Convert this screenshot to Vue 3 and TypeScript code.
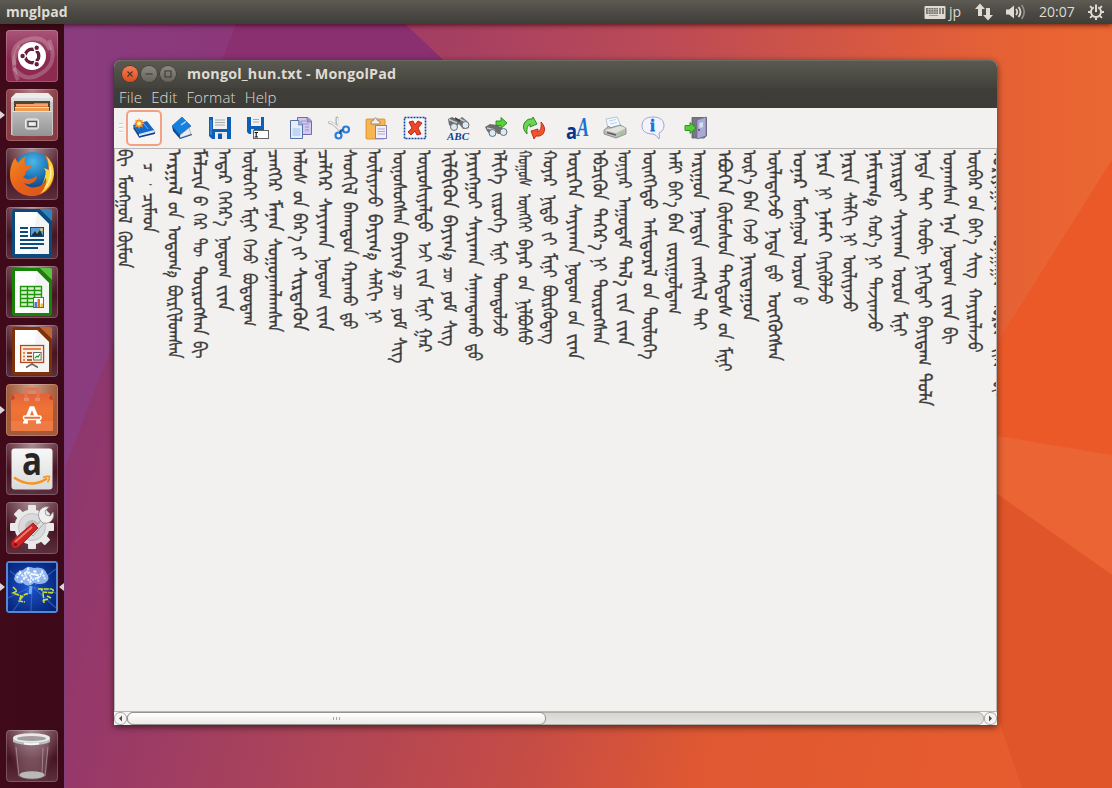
<script setup lang="ts">
import { nextTick, onMounted, ref } from 'vue'

// A word of the vertical text: its letters, where it begins and where it ends, in thirds of a pixel.
type Word = [string, number, number]

const lines: Word[][] = [
  [['ᠪᠢ', 12, 65], ['ᠮᠣᠩᠭᠣᠯ', 90, 235], ['ᠬᠦᠮᠦᠨ', 258, 370]],
  [['ᠴ', 53, 80], ['᠂', 112, 122], ['ᠴᠢᠮᠡᠳ', 145, 265]],
  [['ᠠᠷᠭᠠᠯ', 12, 150], ['\u202fᠤᠨ', 172, 220], ['ᠤᠲᠤᠭ᠎ᠠ', 243, 398], ['ᠪᠦᠷᠭᠢᠯᠤᠭᠰᠠᠨ', 420, 640]],
  [['ᠮᠠᠯᠴᠢᠨ', 12, 137], ['\u202fᠤ', 155, 185], ['ᠭᠡᠷ', 205, 255], ['ᠲᠦ', 278, 335], ['ᠲᠥᠷᠦᠭᠰᠡᠨ', 362, 570], ['ᠪᠢ', 588, 640]],
  [['ᠠᠲᠠᠷ', 12, 117], ['ᠬᠡᠭᠡᠷ᠎ᠡ', 138, 245], ['ᠨᠤᠲᠤᠭ', 273, 398], ['\u202fᠢᠶᠠᠨ', 420, 500]],
  [['ᠥᠯᠦᠭᠡᠢ', 12, 165], ['ᠮᠢᠨᠢ', 187, 262], ['ᠭᠡᠵᠦ', 283, 358], ['ᠪᠣᠳᠣᠳᠠᠭ', 385, 545]],
  [['ᠴᠡᠩᠬᠡᠷ', 12, 140], ['ᠮᠠᠨᠠᠨ', 165, 260], ['ᠰᠤᠭᠤᠨᠠᠭᠯᠠᠭᠰᠠᠨ', 280, 562]],
  [['ᠠᠯᠤᠰ', 12, 118], ['\u202fᠤᠨ', 140, 187], ['ᠪᠠᠷ᠎ᠠ', 203, 290], ['\u202fᠶᠢ', 305, 345], ['ᠰᠢᠷᠲᠡᠬᠦᠨ', 365, 558]],
  [['ᠴᠡᠯᠭᠡᠷ', 12, 137], ['ᠰᠠᠶᠢᠬᠠᠨ', 158, 308], ['ᠨᠤᠲᠤᠭ', 335, 460], ['\u202fᠢᠶᠠᠨ', 482, 558]],
  [['ᠰᠡᠳᠬᠢᠯ', 12, 148], ['ᠪᠠᠬᠠᠳᠤᠨ', 170, 327], ['ᠬᠠᠷᠠᠬᠤ', 347, 482], ['\u202fᠳᠤ', 507, 555]],
  [['ᠦᠯᠢᠶᠡᠵᠦ', 12, 185], ['ᠪᠠᠶᠢᠭ᠎ᠠ', 207, 348], ['ᠰᠠᠯᠬᠢ', 370, 470], ['ᠨᠢ', 495, 535]],
  [['ᠦᠨᠦᠰᠦᠭᠰᠡᠨ', 15, 242], ['ᠪᠠᠶᠢᠭ᠎ᠠ', 260, 400], ['ᠴᠦ', 418, 465], ['ᠶᠤᠮ', 490, 555], ['ᠰᠢᠭ', 577, 657]],
  [['ᠦᠷᠦᠰᠢᠶᠡᠯᠲᠦ', 15, 262], ['ᠡᠵᠢ', 290, 350], ['\u202fᠶᠢᠨ', 370, 432], ['ᠮᠢᠨᠢ', 455, 527], ['ᠭᠠᠷ', 550, 623]],
  [['ᠢᠯᠪᠢᠬᠦᠨ', 15, 188], ['ᠪᠠᠶᠢᠭ᠎ᠠ', 210, 348], ['ᠴᠦ', 367, 413], ['ᠶᠤᠮ', 438, 502], ['ᠰᠢᠭ', 525, 605]],
  [['ᠨᠠᠷᠢᠩᠭᠤᠢ', 15, 193], ['ᠰᠠᠶᠢᠬᠠᠨ', 213, 362], ['ᠰᠠᠨᠠᠭᠳᠠᠬᠤ', 385, 578], ['\u202fᠳᠤ', 600, 650]],
  [['ᠡᠯᠢᠭᠡ', 15, 118], ['ᠵᠢᠷᠦᠬᠡ', 140, 263], ['ᠮᠢᠨᠢ', 287, 358], ['ᠳᠣᠭᠳᠣᠯᠵᠤ', 383, 573]],
  [['ᠬᠤᠭᠤᠰ', 15, 125], ['ᠦᠩᠭᠡᠢ', 147, 262], ['ᠪᠠᠶᠠᠷ', 283, 372], ['\u202fᠤᠨ', 395, 440], ['ᠨᠢᠯᠪᠤᠰᠤ', 463, 603]],
  [['ᠬᠣᠶᠠᠷ', 15, 125], ['ᠨᠢᠳᠦ', 150, 240], ['\u202fᠶᠢ', 262, 300], ['ᠮᠢᠨᠢ', 323, 397], ['ᠪᠦᠷᠬᠦᠳᠡᠭ', 420, 598]],
  [['ᠥᠷᠭᠡᠨ', 15, 158], ['ᠰᠠᠶᠢᠬᠠᠨ', 178, 327], ['ᠨᠤᠲᠤᠭ', 350, 475], ['\u202fᠤᠨ', 500, 545], ['\u202fᠢᠶᠠᠨ', 565, 643]],
  [['ᠡᠪᠴᠢᠭᠦᠨ', 15, 165], ['ᠲᠡᠭᠡᠷ᠎ᠡ', 188, 315], ['ᠨᠢ', 335, 377], ['ᠲᠥᠷᠦᠭᠰᠡᠨ', 402, 600]],
  [['ᠤᠨᠢᠶᠠᠷ', 15, 130], ['ᠠᠭᠤᠳᠠᠮ', 155, 308], ['ᠲᠠᠯ᠎ᠠ', 332, 423], ['\u202fᠶᠢᠨ', 443, 508], ['\u202fᠢᠶᠠᠨ', 525, 605]],
  [['ᠦᠩᠭᠡᠲᠦ', 15, 193], ['ᠠᠮᠢᠳᠤᠷᠠᠯ', 218, 393], ['\u202fᠤᠨ', 415, 463], ['ᠲᠥᠯᠦᠭᠡ', 485, 642]],
  [['ᠠᠮᠢ', 15, 87], ['ᠪᠡᠶ᠎ᠡ', 107, 187], ['ᠪᠡᠨ', 205, 268], ['ᠵᠣᠷᠢᠭᠤᠯᠳᠠᠭ', 290, 507]],
  [['ᠠᠷᠢᠭᠤᠨ', 15, 163], ['ᠨᠠᠨᠳᠢᠨ', 190, 310], ['ᠵᠠᠩᠰᠢᠯ', 333, 465], ['ᠲᠠᠢ', 490, 557]],
  [['ᠡᠪᠦᠭᠡᠨ', 15, 150], ['ᠬᠦᠮᠦᠰᠦᠨ', 170, 335], ['ᠲᠡᠭᠲᠦᠰ', 357, 517], ['\u202fᠤᠨ', 537, 585], ['ᠮᠢᠨᠢ', 607, 680]],
  [['ᠦᠷ᠎ᠡ', 15, 118], ['ᠪᠡᠨ', 138, 202], ['ᠭᠡᠵᠦ', 222, 300], ['ᠨᠠᠢᠳᠠᠭᠤᠨ', 325, 532]],
  [['ᠦᠯᠡᠳᠡᠭᠵᠦ', 15, 223], ['ᠨᠠᠳᠠ', 250, 342], ['\u202fᠳᠤ', 363, 413], ['ᠦᠭᠭᠦᠭᠰᠡᠨ', 440, 648]],
  [['ᠤᠨᠠᠷ', 15, 133], ['ᠮᠣᠩᠭᠣᠯ', 155, 300], ['ᠣᠷᠣᠨ', 325, 437], ['\u202fᠤ', 460, 480]],
  [['ᠨᠠᠷᠠ', 15, 100], ['ᠨᠢ', 125, 163], ['ᠨᠠᠮᠠᠢ', 190, 293], ['ᠭᠡᠶᠢᠭᠦᠯᠵᠦ', 317, 478]],
  [['ᠨᠠᠷᠢᠨ', 15, 118], ['ᠰᠠᠯᠬᠢ', 140, 242], ['ᠨᠢ', 265, 305], ['ᠦᠯᠢᠶᠡᠵᠦ', 330, 500]],
  [['ᠨᠠᠮᠢᠷᠠᠭ᠎ᠠ', 15, 185], ['ᠬᠤᠷ᠎ᠠ', 210, 307], ['ᠨᠢ', 330, 372], ['ᠳᠠᠵᠢᠭᠵᠤ', 395, 560]],
  [['ᠨᠠᠶᠢᠷᠲᠠᠢ', 15, 170], ['ᠰᠠᠶᠢᠬᠠᠨ', 192, 343], ['ᠣᠷᠣᠨ', 365, 478], ['ᠮᠢᠨᠢ', 500, 573]],
  [['ᠨᠠᠳᠠ', 15, 107], ['ᠲᠠᠢ', 127, 198], ['ᠬᠤᠪᠢ', 220, 330], ['ᠨᠢᠭᠡᠲᠡᠢ', 355, 490], ['ᠪᠠᠶᠢᠳᠠᠭ', 512, 662], ['ᠲᠤᠯᠠ', 683, 782]],
  [['ᠤᠨᠠᠭᠰᠠᠨ', 15, 182], ['ᠡᠨᠡ', 207, 272], ['ᠨᠤᠲᠤᠭ', 297, 423], ['\u202fᠢᠶᠠᠨ', 445, 525], ['ᠪᠢ', 545, 597]],
  [['ᠥᠪᠡᠷ', 15, 135], ['\u202fᠤᠨ', 155, 200], ['ᠪᠡᠶ᠎ᠡ', 220, 300], ['ᠰᠢᠭ', 322, 403], ['ᠬᠠᠶᠢᠷᠠᠯᠠᠵᠤ', 430, 623]],
  [['ᠤᠷᠢᠶᠠᠭᠠᠨ', 15, 205], ['ᠤᠨᠠᠭᠠᠭᠠᠨ', 265, 430], ['ᠣᠷᠣᠨ', 475, 575], ['\u202fᠢᠶᠠᠨ', 610, 670], ['ᠪᠢ', 708, 755]],
]

// The narrow space that a suffix begins with belongs to the gap before it.
const lead = (w: Word) => (w[0].startsWith('\u202f') ? 4.5 : 0)
const gapBefore = (line: Word[], i: number) => (line[i][1] - (i ? line[i - 1][2] : 12)) / 3 - lead(line[i])
const sizeOf = (w: Word) => (w[2] - w[1]) / 3 + lead(w)

const page = ref<HTMLElement | null>(null)
const fit = ref<Record<string, number>>({})

// Stretches each word to the length it is set in.
function measure() {
  const next: Record<string, number> = {}
  page.value?.querySelectorAll<HTMLElement>('.glyphs').forEach((el) => {
    const [l, w] = el.dataset.key!.split('-').map(Number)
    if (el.offsetHeight) next[el.dataset.key!] = sizeOf(lines[l][w]) / el.offsetHeight
  })
  fit.value = next
}

onMounted(async () => {
  await nextTick()
  measure()
  document.fonts?.ready.then(measure)
})

const menus = ['File', 'Edit', 'Format', 'Help']
</script>

<template>
  <div class="desktop">
    <svg class="wallpaper" viewBox="0 0 1112 788" preserveAspectRatio="none" aria-hidden="true">
      <defs>
        <linearGradient id="wall" gradientUnits="userSpaceOnUse" x1="60" y1="300" x2="1010" y2="540">
          <stop offset="0" stop-color="#883772" />
          <stop offset=".12" stop-color="#95386a" />
          <stop offset=".36" stop-color="#ad4458" />
          <stop offset=".58" stop-color="#c64c45" />
          <stop offset=".75" stop-color="#df5832" />
          <stop offset="1" stop-color="#e65c2f" />
        </linearGradient>
        <linearGradient id="wallTop" x1="0" x2="1">
          <stop offset="0" stop-color="#a03d64" />
          <stop offset=".36" stop-color="#bb4a57" />
          <stop offset=".72" stop-color="#dc5b3d" />
          <stop offset=".9" stop-color="#e96432" />
          <stop offset="1" stop-color="#ea6632" />
        </linearGradient>
        <linearGradient id="facet" x1="0" y1="0" x2="1" y2="0">
          <stop offset="0" stop-color="#8a3d80" />
          <stop offset="1" stop-color="#8b3779" />
        </linearGradient>
      </defs>
      <rect width="1112" height="788" fill="url(#wall)" />
      <path d="M400 24H1112V160L980 370V120L448 60Z" fill="url(#wallTop)" />
      <path d="M64 24H236L220 66L64 470Z" fill="url(#facet)" />
      <path d="M236 24H405L450 66H220Z" fill="#8a2f70" />
      <path d="M1112 160V460L980 433V370Z" fill="#eb5928" />
      <path d="M980 433L1112 455V575L980 482Z" fill="#ea6434" />
      <path d="M980 482L1112 575V788H1022L1000 724Z" fill="#e05529" />
    </svg>

    <header class="panel">
      <span class="app-name">mnglpad</span>
      <div class="indicators">
        <svg class="i-key" width="22" height="15" viewBox="0 0 22 15">
          <rect x=".5" y="1" width="21" height="13" rx="1" fill="#dfdbd2" />
          <rect x="2" y="3" width="12" height="6" fill="#77756f" />
          <rect x="15" y="3" width="2" height="6" fill="#8d8a83" />
          <rect x="18" y="3" width="2" height="6" fill="#77756f" />
          <path d="M3 4.500H14M2.500 7H14M4.500 3V9M7 3V9M9.500 3V9M12 3V9" stroke="#c8c5bd" stroke-width=".6" />
          <path d="M5 10.500H14" stroke="#9c9991" />
        </svg>
        <span class="jp">jp</span>
        <svg class="i-net" width="18" height="18" viewBox="0 0 18 18" fill="#dfdbd2">
          <path d="M0 6L5 .5L10 6H7V13H3V6Z" />
          <path d="M8 12H11V5H15V12H18L13 17.500Z" />
        </svg>
        <svg class="i-vol" width="20" height="16" viewBox="0 0 20 16">
          <path d="M0 5.500H3L8 1.500V14.500L3 10.500H0Z" fill="#dfdbd2" />
          <path d="M10 5Q12.500 8 10 11" stroke="#dfdbd2" stroke-width="1.800" fill="none" />
          <path d="M12.500 3Q16.500 8 12.500 13" stroke="#dfdbd2" stroke-width="1.800" fill="none" />
          <path d="M15.500 1Q21 8 15.500 15" stroke="#918f88" stroke-width="1.600" fill="none" />
        </svg>
        <span class="clock">20:07</span>
        <svg class="i-gear" width="18" height="18" viewBox="-9 -9 18 18" fill="none" stroke="#dfdbd2" stroke-width="2">
          <path d="M-2.200 -4.600A5.100 5.100 0 1 0 2.200 -4.600" />
          <path d="M0 -7.500V0" />
          <path d="M5.500 0H8M-5.500 0H-8M0 5.500V8M3.900 3.900L5.900 5.900M-3.900 3.900L-5.900 5.900M3.900 -3.900L5.900 -5.900M-3.900 -3.900L-5.900 -5.900" />
        </svg>
      </div>
    </header>

    <nav class="launcher">
      <div class="tile dash">
        <svg viewBox="0 0 52 52">
          <g fill="none" stroke="#fff" stroke-opacity=".22" stroke-width="4">
            <path d="M9 35Q2 16 20 10T44 20" /><path d="M43 10Q53 32 36 43T8 38" /><path d="M12 50Q3 32 14 16" />
          </g>
          <circle cx="26" cy="26" r="14" fill="#fff" />
          <circle cx="26" cy="26" r="6.800" fill="none" stroke="#671f3d" stroke-width="3.400" />
          <path d="M26 26H36.500M26 26L20.700 16.900M26 26L20.700 35.100" stroke="#fff" stroke-width="1.500" transform="rotate(180 26 26)" />
          <circle cx="26" cy="26" r="5" fill="#fff" />
          <g fill="#671f3d" stroke="#fff" stroke-width="1.200"><circle cx="16.600" cy="26" r="2.800" /><circle cx="30.700" cy="17.700" r="2.800" /><circle cx="30.700" cy="34.300" r="2.800" /></g>
        </svg>
      </div>
      <div class="tile files running">
        <svg viewBox="0 0 52 52">
          <defs><linearGradient id="cab" x1="0" y1="0" x2="0" y2="1"><stop offset="0" stop-color="#bdbdbd" /><stop offset="1" stop-color="#949494" /></linearGradient></defs>
          <path d="M10 4H42L47 9V46H5V9Z" fill="#c9c9c9" />
          <path d="M10 4H42L47 9H5Z" fill="#ededed" />
          <path d="M5 9H47V13H5Z" fill="#dcdcdc" />
          <path d="M8 12H44V24H8Z" fill="#56432f" />
          <path d="M10 15H27L29 14H42V24H10Z" fill="#e8793a" />
          <path d="M10 16H42" stroke="#f7d6a2" />
          <path d="M9 18H43V24H9Z" fill="#f09a50" /><path d="M9 18.500H43" stroke="#fbdcae" />
          <path d="M6.500 22H46V47H6.500Z" fill="url(#cab)" />
          <path d="M6.500 22.500H46" stroke="#e4e4e4" />
          <rect x="19.500" y="30" width="13" height="10" rx="2" fill="#c9c9c9" stroke="#f0f0f0" />
          <rect x="22" y="32.500" width="8.500" height="5" fill="#eee" stroke="#555" stroke-width="1.300" />
        </svg>
      </div>
      <div class="tile plain">
        <svg viewBox="0 0 52 52">
          <defs>
            <radialGradient id="globe" cx=".5" cy=".25" r=".75"><stop offset="0" stop-color="#4bb9e8" /><stop offset=".55" stop-color="#1a70b4" /><stop offset="1" stop-color="#10366e" /></radialGradient>
            <linearGradient id="fox" x1="0" y1="0" x2="1" y2="1"><stop offset="0" stop-color="#f38b1e" /><stop offset=".5" stop-color="#e6601c" /><stop offset="1" stop-color="#d9521a" /></linearGradient>
          </defs>
          <circle cx="27" cy="24" r="20" fill="url(#globe)" />
          <path d="M39 7Q48 14 48 26C48 38 39 48 26 48C13 48 4 39 4 27C4 20 6 14 9 10L12 15Q16 10 20 8Q17 13 20 17L25 18Q25 21 20 23Q20 27 17 29Q24 34 30 28Q32 30 29 33Q24 38 18 35Q24 42 34 38Q44 32 42 17Q41 12 39 7Z" fill="url(#fox)" />
          <path d="M40 8Q48 14 48 26Q46 40 34 46Q42 37 40 30L36 37Q42 24 38 20L43 22Q43 13 40 8Z" fill="#fbd33a" />
          <path d="M44 18Q47 30 39 40" stroke="#fff3a8" stroke-width="1.500" fill="none" />
        </svg>
      </div>
      <div class="tile plain">
        <svg viewBox="0 0 52 52">
          <path d="M9 2H34L46 14V47Q46 50 43 50H9Q6 50 6 47V5Q6 2 9 2Z" fill="#0b4a7c" />
          <path d="M9 5H31L43 17V47H9Z" fill="#fff" />
          <path d="M31 5L43 17V47H24Z" fill="#ececec" opacity=".6" />
          <path d="M34 2H44Q46 2 46 4V14Z" fill="#3184bb" />
          <path d="M14 21H22M14 25H22M14 29H22M14 33H38M14 37H38M14 41H32" stroke="#0d4d7d" stroke-width="2" />
          <rect x="24.500" y="20.500" width="13" height="9" fill="#5ba0d4" stroke="#0d4d7d" />
          <path d="M25 29L29 24L31 27L34 23L37 29Z" fill="#222e38" /><circle cx="35.500" cy="22.500" r="1.500" fill="#f4c93e" />
        </svg>
      </div>
      <div class="tile plain">
        <svg viewBox="0 0 52 52">
          <path d="M9 2H34L46 14V47Q46 50 43 50H9Q6 50 6 47V5Q6 2 9 2Z" fill="#178306" />
          <path d="M9 5H31L43 17V47H9Z" fill="#fff" />
          <path d="M31 5L43 17V47H24Z" fill="#ececec" opacity=".6" />
          <path d="M34 2H44Q46 2 46 4V14Z" fill="#58c43c" />
          <rect x="14" y="20" width="22" height="20" fill="#d7f3cc" />
          <path d="M14.500 20.500H35.500V40.500H14.500ZM14 24.500H36M14 28.500H36M14 32.500H36M14 36.500H36M21.500 20V41M28.500 20V41" fill="none" stroke="#249511" stroke-width="1.400" />
          <rect x="27.500" y="31.500" width="10" height="10" fill="#fff" stroke="#666" />
          <path d="M28.500 36H31V41H28.500Z" fill="#3a80c4" /><path d="M31.500 33H34V41H31.500Z" fill="#e56d1f" /><path d="M34.500 37.500H37V41H34.500Z" fill="#eec12d" />
        </svg>
      </div>
      <div class="tile plain">
        <svg viewBox="0 0 52 52">
          <path d="M9 2H34L46 14V47Q46 50 43 50H9Q6 50 6 47V5Q6 2 9 2Z" fill="#7d3309" />
          <path d="M9 5H31L43 17V47H9Z" fill="#fff" />
          <path d="M31 5L43 17V47H24Z" fill="#ececec" opacity=".6" />
          <path d="M34 2H44Q46 2 46 4V14Z" fill="#bd6632" />
          <rect x="14.600" y="20.500" width="23" height="17" fill="#fbeee3" stroke="#b04a1c" stroke-width="1.300" />
          <path d="M17 24H35" stroke="#dc6a2b" stroke-width="1.600" />
          <path d="M17 28H19M17 31.500H19M17 35H19" stroke="#e68a52" stroke-width="1.800" /><path d="M21 28H26M21 31.500H26M21 35H26" stroke="#8c3a12" stroke-width="1.500" />
          <rect x="27.600" y="27.500" width="7.500" height="7.500" fill="#fff" stroke="#666" /><path d="M29 33L31 31L32 32L34 29" stroke="#269a26" stroke-width="1.200" fill="none" />
          <path d="M26 38V40M26 39L20 42.500M26 39L32 42.500" stroke="#666" stroke-width="1.500" />
        </svg>
      </div>
      <div class="tile store running">
        <svg viewBox="0 0 52 52">
          <defs><linearGradient id="bag" x1="0" y1="0" x2="0" y2="1"><stop offset="0" stop-color="#e3623a" /><stop offset=".4" stop-color="#ef7434" /><stop offset="1" stop-color="#ea6a35" /></linearGradient></defs>
          <path d="M7 10H45L47 16V47H5V16Z" fill="url(#bag)" />
          <path d="M5 16L7 10L9 15M43 15L45 10L47 16" fill="#c3441f" />
          <path d="M5 37H47V47H5Z" fill="#f28a55" opacity=".5" />
          <path d="M20 17V8Q20 5 22 5H30Q32 5 32 8V17" fill="none" stroke="#e57450" stroke-width="3" /><path d="M18 15.500H23M29 15.500H34" stroke="#e8896d" stroke-width="3.500" />
          <path d="M19 39L25 24H27L33 39" stroke="#fff" stroke-width="3.500" fill="none" />
          <path d="M17 38.500H22M30 38.500H35" stroke="#fff" stroke-width="2" />
          <rect x="17.500" y="32" width="17.500" height="3.500" rx="1.500" fill="#ed7036" stroke="#fff" stroke-width="1.500" />
        </svg>
      </div>
      <div class="tile plain">
        <svg viewBox="0 0 52 52">
          <defs><linearGradient id="amz" x1="0" y1="0" x2="0" y2="1"><stop offset="0" stop-color="#f8f8f8" /><stop offset="1" stop-color="#dadada" /></linearGradient></defs>
          <rect x="5.500" y="5.500" width="41" height="41" rx="3" fill="url(#amz)" />
          <text x="26" y="32" class="amazon" text-anchor="middle" textLength="20" lengthAdjust="spacingAndGlyphs">a</text>
          <path d="M8 34.500Q25 46 41 35.500" fill="none" stroke="#f79421" stroke-width="2.600" />
          <path d="M37 34.500Q41 33 43.500 33.500Q43.500 37 41.500 39.500" fill="none" stroke="#f79421" stroke-width="1.600" />
        </svg>
      </div>
      <div class="tile plain">
        <svg viewBox="0 0 52 52">
          <g transform="translate(26 25)" fill="#e9e9e9">
            <circle r="17.500" />
            <rect v-for="n in 8" :key="n" x="-4" y="-22" width="8" height="9" rx="1" :transform="`rotate(${n * 45})`" />
          </g>
          <circle cx="26" cy="25" r="13.500" fill="#dadada" stroke="#c2c2c2" /><circle cx="26" cy="25" r="7" fill="#c4b9bd" />
          <path d="M24 31L36 17L39 20L27 34Z" fill="#ddd" stroke="#999" stroke-width=".8" />
          <path d="M34 18Q30 11 36 6Q39 4 43 5L39 9L40 13L44 14L47 10Q49 16 44 20Q41 22 37 21Z" fill="#f0f0f0" stroke="#8b8b8b" stroke-width=".8" />
          <path d="M27 21L32 26L13 45Q9 48 6 45Q4 42 6 39Z" fill="#cd2424" stroke="#8d1212" stroke-width=".8" />
          <path d="M26 25L9 40" stroke="#ef7a70" stroke-width="1.800" /><circle cx="9.500" cy="42.500" r="1.500" fill="#701010" />
        </svg>
      </div>
      <div class="tile pad running focused">
        <svg viewBox="0 0 52 52">
          <defs><radialGradient id="sea" cx=".45" cy=".5" r=".7"><stop offset="0" stop-color="#1e55cd" /><stop offset="1" stop-color="#03206f" /></radialGradient></defs>
          <rect x="2" y="2" width="48" height="48" fill="url(#sea)" />
          <path d="M24 26L4 10M25 26L2 37M25 26L7 50M26 26L25 50M27 26L50 47M28 26L50 32M29 24L50 8" stroke="#4c83e6" stroke-opacity=".5" stroke-width="1.200" />
          <path d="M8 18Q9 10 17 9Q21 4 28 7Q38 5 41 13Q45 18 39 22Q34 24 28 22Q22 27 17 22Q11 24 8 18Z" fill="#8fb4ee" />
          <path d="M11 17L14 11L18 17L22 8L25 17L29 9L32 18L36 11L39 18M15 21L20 16L24 21L29 17L34 21M18 12L27 13L35 15" stroke="#f2f8ff" stroke-width="2" fill="none" stroke-dasharray="2 1.300" />
          <path d="M25 25L24 33" stroke="#75b0ec" stroke-width="3" />
          <path d="M7 26L11 30L7 32L15 35L13 40L19 41M14 39Q18 32 22 33M32 28H45Q49 29 46 32L37 31L35 28M37 32L38 42M41 35L45 37M42 38L36 40" fill="none" stroke="#cfdf2e" stroke-width="1.500" stroke-dasharray="5 .8" />
        </svg>
      </div>
      <div class="tile plain trash">
        <svg viewBox="0 0 52 52">
          <path d="M8 11H43L40 47Q26 53 12 47Z" fill="#b99aa7" fill-opacity=".2" />
          <path d="M10 17L13 46M42 17L39 46M37 18L36 44" stroke="#d8cbd1" stroke-opacity=".45" fill="none" />
          <ellipse cx="26" cy="45" rx="12.500" ry="3.800" fill="#b7bab7" />
          <path d="M7 8V12Q13 15 26 15T44 12V8Z" fill="#b6bdba" />
          <ellipse cx="25.500" cy="8" rx="18.500" ry="4.800" fill="#e7eae8" /><ellipse cx="25.500" cy="8.500" rx="14.500" ry="2.600" fill="#a39b9f" />
          <path d="M18 13.500Q25 15 33 13.500" stroke="#f7f7f7" stroke-width="2" fill="none" />
        </svg>
      </div>
    </nav>

    <main class="window">
      <div class="titlebar">
        <span class="wbtn close"><svg viewBox="0 0 16 16"><path d="M5.500 5.500L10.500 10.500M10.500 5.500L5.500 10.500" /></svg></span>
        <span class="wbtn"><svg viewBox="0 0 16 16"><path d="M4.500 8H11.500" /></svg></span>
        <span class="wbtn"><svg viewBox="0 0 16 16"><path d="M5 5H11V11H5Z" /></svg></span>
        <h1>mongol_hun.txt - MongolPad</h1>
      </div>
      <div class="menubar"><span v-for="m in menus" :key="m">{{ m }}</span></div>

      <div class="toolbar">
        <i class="handle"></i>
        <button class="on" title="New">
          <svg viewBox="0 0 24 24"><path d="M1 12L7 21L22 18L23 16L21 13Z" fill="#dfe6ee" stroke="#777" stroke-width=".5" /><path d="M1 9L15 5L22 14L7 18Z" fill="#1169cc" /><path d="M1 9L7 18V21L2 13Z" fill="#083c82" /><path d="M7 21L23 17" stroke="#0b3f8f" stroke-width="1.400" /><path d="M12 8L16 13" stroke="#69aef3" /><circle cx="7" cy="7.500" r="3.800" fill="#f27b1e" /><path d="M7 2.500V12.500M2 7.500H12M3.500 4L10.500 11M10.500 4L3.500 11" stroke="#fba52d" stroke-width="1.100" /><circle cx="7" cy="7.500" r="2" fill="#fff4a0" /></svg>
        </button>
        <button title="Open">
          <svg viewBox="0 0 24 24"><path d="M12 1L21 10L10 19L2 10Z" fill="#1680df" stroke="#075aad" stroke-width=".6" /><path d="M2 10L10 19V23L3 15Z" fill="#0a4b9a" /><path d="M10 19L19 12L21 18L10 22Z" fill="#e9edf0" stroke="#79828b" stroke-width=".5" /><path d="M10 22.500L22 18.500" stroke="#174f92" stroke-width="1.300" /><path d="M11 9L16 5.500" stroke="#b6dcff" stroke-width="1.400" /></svg>
        </button>
        <button title="Save">
          <svg viewBox="0 0 24 24"><path d="M1 1H23V23H4L1 20Z" fill="#0c5fb6" /><path d="M3 4V19" stroke="#5a9fe2" /><path d="M5 1H19V13H5Z" fill="#f1f1f1" /><path d="M7 4H17M7 6.500H17M7 9H17" stroke="#a9a9a9" /><path d="M7 16H19V23H7Z" fill="#e8ecef" /><path d="M10 17.500H14V23H10Z" fill="#1257a3" /></svg>
        </button>
        <button title="Save as">
          <svg viewBox="0 0 24 24"><path d="M1 1H18V18H3L1 16Z" fill="#0c5fb6" /><path d="M5 1H15V10H5Z" fill="#f1f1f1" /><path d="M7 3.500H13M7 6H13" stroke="#a9a9a9" /><path d="M5 13H8V18H5Z" fill="#d8dfe8" /><rect x="7.500" y="14.500" width="15" height="8" fill="#fff" stroke="#636363" /><path d="M8.500 16.500H12M10.200 16.500V21M8.500 21H12" stroke="#111" stroke-width="1.100" /></svg>
        </button>
        <i class="space"></i>
        <button title="Copy">
          <svg viewBox="0 0 24 24"><path d="M8.500 1.500H19L22.500 5V18.500H8.500Z" fill="#cfcaee" stroke="#7569ae" /><path d="M18 1V6H23" fill="#a095cf" stroke="#7569ae" stroke-width=".6" /><path d="M12 5H17M14 8H20M16 11H20M16 14H20" stroke="#9a92cc" /><path d="M1.500 4.500H10L13.500 8V22.500H1.500Z" fill="#e6edf8" stroke="#5571a6" /><path d="M9.500 4V9H14" fill="#9baed4" stroke="#5571a6" stroke-width=".6" /><path d="M3.500 12H11.500V20H3.500Z" fill="#c2d8f2" /></svg>
        </button>
        <button title="Cut">
          <svg viewBox="0 0 24 24"><path d="M2.500 6.500Q7 7 13 14.500M10 2Q9 10 14 16" stroke="#b4b6b8" stroke-width="3" stroke-linecap="round" fill="none" /><path d="M2 6Q7 7 13 14M10.500 2Q10 9 14 15" stroke="#f2f2f2" stroke-width="1.300" fill="none" /><circle cx="19" cy="13.500" r="3" fill="none" stroke="#2d7ed8" stroke-width="2.200" /><circle cx="11.500" cy="19.500" r="3" fill="none" stroke="#2d7ed8" stroke-width="2.200" /><path d="M13 15L16 14M13.500 15L13 18" stroke="#1857a6" stroke-width="2" /></svg>
        </button>
        <button title="Paste">
          <svg viewBox="0 0 24 24"><rect x="1" y="3" width="19" height="20" rx="1" fill="#f8b554" stroke="#d88820" stroke-width=".8" /><path d="M6 8V5.500L8.500 4.500Q10.500 -1 12.500 4.500L15 5.500V8Z" fill="#efefef" stroke="#858585" stroke-width=".9" /><rect x="10.500" y="9.500" width="11" height="13" fill="#f0effa" stroke="#8981ba" /><path d="M12.500 13H20M12.500 15.500H20M12.500 18H20" stroke="#aaa6d3" stroke-width="1.200" /></svg>
        </button>
        <button title="Delete">
          <svg viewBox="0 0 24 24"><rect x="1.500" y="1.500" width="21" height="21" fill="#f7f7fb" stroke="#14459c" stroke-width="1.600" stroke-dasharray="2 1" /><path d="M6 6L10 5L12 9L15 5L19 7L15 12L18 18L14 19L12 15L8 19L5 16L9 12Z" fill="#ee4825" stroke="#b01c10" stroke-width=".9" /></svg>
        </button>
        <i class="space"></i>
        <button title="Find">
          <svg viewBox="0 0 24 24"><path d="M2 3L6 1L12 4L16 1L21 5L23 12L17 13L13 8L8 13L3 9Z" fill="#6b6d6f" /><path d="M3 3.500L11 7M14 3L20 6" stroke="#c6c9cb" stroke-width="1.500" /><path d="M9 2L14 5" stroke="#3c3c3c" stroke-width="1.500" /><circle cx="8" cy="11" r="3.500" fill="#d9ebf7" stroke="#6a6f74" /><circle cx="19.500" cy="9" r="3.500" fill="#d9ebf7" stroke="#6a6f74" /><text x="1" y="23.500" class="abc" textLength="22" lengthAdjust="spacingAndGlyphs">ABC</text></svg>
        </button>
        <button title="Find next">
          <svg viewBox="0 0 24 24"><path d="M1 11L6 8L13 9L18 12L21 18L14 18L11 15L7 19L3 15Z" fill="#6b6d6f" /><path d="M3 12L11 14" stroke="#c8cacc" stroke-width="1.500" /><circle cx="8.500" cy="17" r="3.500" fill="#d9ebf7" stroke="#6a6f74" /><circle cx="19.500" cy="16" r="3.500" fill="#d9ebf7" stroke="#6a6f74" /><path d="M12 5H17V1.500L23 7L17 12.500V9.500H12Z" fill="#57d238" stroke="#238c17" stroke-width=".9" /></svg>
        </button>
        <button title="Replace">
          <svg viewBox="0 0 24 24"><path d="M5 18Q-1 12 3 6Q6 2 10 3L11 1L15 8L8 11V8Q4 10 5 18Z" fill="#6fd352" stroke="#218318" stroke-width=".9" /><path d="M19 6Q25 12 21 18Q18 21 14 20L12 23L9 15L16 13V16Q20 14 19 6Z" fill="#f1532b" stroke="#b92815" stroke-width=".9" /></svg>
        </button>
        <i class="space"></i>
        <button title="Font">
          <svg viewBox="0 0 24 24"><text x="1" y="23" class="fa" textLength="11" lengthAdjust="spacingAndGlyphs">a</text><text x="12" y="20" class="fb" textLength="12" lengthAdjust="spacingAndGlyphs">A</text></svg>
        </button>
        <button title="Print">
          <svg viewBox="0 0 24 24"><path d="M5 12L3 3L14 1L18 10Z" fill="#f4f9ff" stroke="#9bb0c4" stroke-width=".7" /><path d="M6 5L13 3.500M7 8L14 6.500" stroke="#b2d5f4" /><path d="M1 14L6 10L7 12L17 9L23 12V18L13 22L1 18Z" fill="#bcbcba" stroke="#777" stroke-width=".7" /><path d="M1 14L13 17L23 12L17 10L7 13Z" fill="#e2e2df" /><path d="M4 16.500L13 19" stroke="#5b5b5b" stroke-width="1.400" /><path d="M17 18L21 16" stroke="#8bd36c" stroke-width="1.500" /></svg>
        </button>
        <button title="About">
          <svg viewBox="0 0 24 24"><path d="M12 1C19 1 23 4 23 10C23 14 20 16 18 17Q19 21 18 23Q16 19 12 18C5 18 1 15 1 10C1 4 5 1 12 1Z" fill="#f3f3fd" stroke="#a6a2cf" /><text x="11.500" y="15" class="info" text-anchor="middle">i</text></svg>
        </button>
        <i class="space"></i>
        <button title="Exit">
          <svg viewBox="0 0 24 24"><path d="M8 1.500H22.500V20L20 22H8Z" fill="#777982" stroke="#595b63" stroke-width=".8" /><path d="M13 4L22 1V20L13 23Z" fill="#a9a9d3" stroke="#6c6c96" stroke-width=".7" /><path d="M15.500 7L19 6V11L15.500 12Z" fill="#d6e1f5" /><circle cx="15" cy="14" r=".9" fill="#444" /><path d="M1 9.500H6V6.500L12 12L6 17.500V14.500H1Z" fill="#55cf35" stroke="#238c17" stroke-width=".9" /></svg>
        </button>
      </div>

      <section ref="page" class="editor">
        <div v-for="(line, l) in lines" :key="l" class="line">
          <span
            v-for="(w, i) in line"
            :key="i"
            class="word"
            :style="{ height: sizeOf(w) + 'px', marginTop: gapBefore(line, i) + 'px' }"
          ><span class="glyphs" :data-key="`${l}-${i}`" :style="{ transform: `scaleY(${fit[`${l}-${i}`] ?? 1})` }">{{ w[0] }}</span></span>
        </div>
      </section>

      <div class="scrollbar">
        <span class="arrow"><svg viewBox="0 0 11 11"><path d="M7 2.500V8.500L4 5.500Z" /></svg></span>
        <div class="track"><div class="thumb"><i></i><i></i><i></i></div></div>
        <span class="arrow"><svg viewBox="0 0 11 11"><path d="M4 2.500V8.500L7 5.500Z" /></svg></span>
      </div>
    </main>
  </div>
</template>

<style>
html, body { margin: 0; overflow: hidden; }
</style>

<style scoped>
.desktop { position: relative; display: grid; grid-template: 24px 1fr / 65px 1fr; width: 1112px; height: 788px; overflow: hidden; font-family: "Open Sans", "Noto Sans", sans-serif; background: #95386a; }
.wallpaper { position: absolute; inset: 0; width: 100%; height: 100%; }
svg { display: block; flex: none; }

.panel { position: relative; z-index: 3; grid-column: 1 / 3; display: flex; align-items: center; justify-content: space-between; padding: 0 7px 0 6px; background: linear-gradient(#5d5b52, #4b4a44 50%, #3f3e39); box-shadow: 0 1px 5px rgba(40, 0, 0, .75); color: #dfdbd2; }
.app-name { font-weight: 700; font-size: 14px; line-height: 22px; letter-spacing: .05px; }
.indicators { display: flex; align-items: center; font-size: 14px; line-height: 22px; }
.jp { width: 14px; margin: 0 12px 0 3px; }
.i-net { margin-right: 13px; }
.i-vol { margin-right: 13px; }
.clock { width: 37px; margin-right: 11px; }

.launcher { position: relative; z-index: 2; display: flex; flex-direction: column; gap: 7px; box-sizing: border-box; padding: 6px 6px 6px; background: linear-gradient(90deg, #400a1a, #3c0918); border-right: 1px solid #80407d; }
.tile { position: relative; flex: none; width: 52px; height: 52px; border-radius: 4px; box-shadow: inset 0 0 0 1px rgba(255, 255, 255, .2); background: radial-gradient(ellipse at 50% 0, rgba(255, 255, 255, .42), transparent 70%), linear-gradient(#6b3c4a, #471423 55%, #5c303f); }
.tile svg { width: 52px; height: 52px; }
.dash { background: linear-gradient(#a95578, #8b2950 55%, #8d2b51); }
.files { background: radial-gradient(ellipse at 50% 0, rgba(255, 255, 255, .35), transparent 70%), #8a3c43; }
.store { background: radial-gradient(ellipse at 50% 0, rgba(255, 255, 255, .4), transparent 70%), #a45a38; }
.pad { background: #3864b8; box-shadow: inset 0 0 0 2px #5687d4; }
.trash { margin-top: auto; }
.running::before { content: ""; position: absolute; left: -6px; top: 22px; border: 4px solid transparent; border-left: 5px solid #dcd6d8; border-right: 0; }
.focused::after { content: ""; position: absolute; right: -6px; top: 22px; border: 4px solid transparent; border-right: 5px solid #dcd6d8; border-left: 0; }
.amazon { font: 700 39px "Open Sans", sans-serif; fill: #262626; }

.window { position: relative; z-index: 1; display: flex; flex-direction: column; width: 883px; height: 665px; margin: 36px 0 0 49px; border-radius: 7px 7px 0 0; background: #f2f1f0; box-shadow: 0 2px 7px rgba(0, 0, 0, .6); }
.titlebar { display: flex; align-items: center; gap: 3px; flex: none; height: 28px; padding-left: 7.500px; border-radius: 7px 7px 0 0; background: linear-gradient(#5b5a52, #42413b); box-shadow: inset 0 1px #6c6a61; }
.wbtn { width: 16px; height: 16px; border-radius: 50%; background: linear-gradient(#8c8980, #65635c); box-shadow: 0 0 0 .5px #34332f; }
.wbtn svg { fill: none; stroke: #3a3934; stroke-width: 1.1; }
.close { background: linear-gradient(#f37e55, #df4b1b); }
h1 { margin: 0 0 0 8.500px; font-weight: 700; font-size: 14.3px; line-height: 24px; letter-spacing: .2px; color: #dfdbd2; }
.menubar { display: flex; gap: 9px; flex: none; height: 20px; padding-left: 5px; background: linear-gradient(#3f3e39, #3c3b37); color: #dfdbd2; font-weight: 300; font-size: 15px; line-height: 19px; letter-spacing: .15px; }

.toolbar { display: flex; align-items: center; flex: none; box-sizing: border-box; height: 40px; padding-left: 5px; background: #f2f1f0; }
.handle { width: 4px; height: 11px; margin-right: 2px; background: repeating-linear-gradient(#cfcdca 0 1px, #fff 1px 2px, transparent 2px 4px); }
.toolbar button { display: grid; place-items: center; box-sizing: border-box; width: 36px; height: 36px; margin: 0 1px; padding: 0; border: 0; border-radius: 5px; background: none; }
.toolbar button.on { border: 2px solid #f2a182; background: #f6f5f4; }
.toolbar svg { width: 24px; height: 24px; }
.space { width: 5px; }
.abc { font: italic 700 10px "Liberation Serif", serif; fill: #123f91; }
.fa { font: 700 21px "Open Sans", sans-serif; fill: #07358c; }
.fb { font: italic 700 27px "Liberation Serif", serif; fill: #1773cf; }
.info { font: 700 16px "Liberation Serif", serif; fill: #1773d1; stroke: #1773d1; stroke-width: .8; }

.editor { display: flex; flex: none; box-sizing: border-box; height: 564px; padding-left: 1px; border: 1px solid #b9b7b3; overflow: hidden; background: #f2f1f0; }
.line { display: flex; flex-direction: column; flex: none; width: 25px; }
.word { display: flex; align-items: flex-start; justify-content: center; flex: none; width: 25px; }
.glyphs { flex: none; writing-mode: vertical-lr; white-space: pre; transform-origin: 50% 0; font: 19px/25px "Noto Sans Mongolian", "Noto Sans", sans-serif; color: #3c3c3c; -webkit-text-stroke: .35px #3c3c3c; }

.scrollbar { display: flex; flex: none; height: 13px; background: #f5f4f3; }
.arrow { width: 13px; box-sizing: border-box; height: 13px; border: 1px solid #aaa8a3; border-radius: 6px; }
.arrow svg { width: 11px; height: 11px; fill: #4c4c4c; }
.track { flex: 1; box-sizing: border-box; height: 13px; border: 1px solid #b0aea9; border-radius: 6px; background: linear-gradient(#d6d5d2, #e4e3e0); }
.thumb { display: flex; align-items: center; justify-content: center; gap: 2px; box-sizing: border-box; width: 419px; height: 13px; margin: -1px; border: 1px solid #96948f; border-radius: 6px; background: linear-gradient(#fff, #ebeae8); }
.thumb i { width: 1px; height: 3px; background: #aaa8a4; }
</style>
